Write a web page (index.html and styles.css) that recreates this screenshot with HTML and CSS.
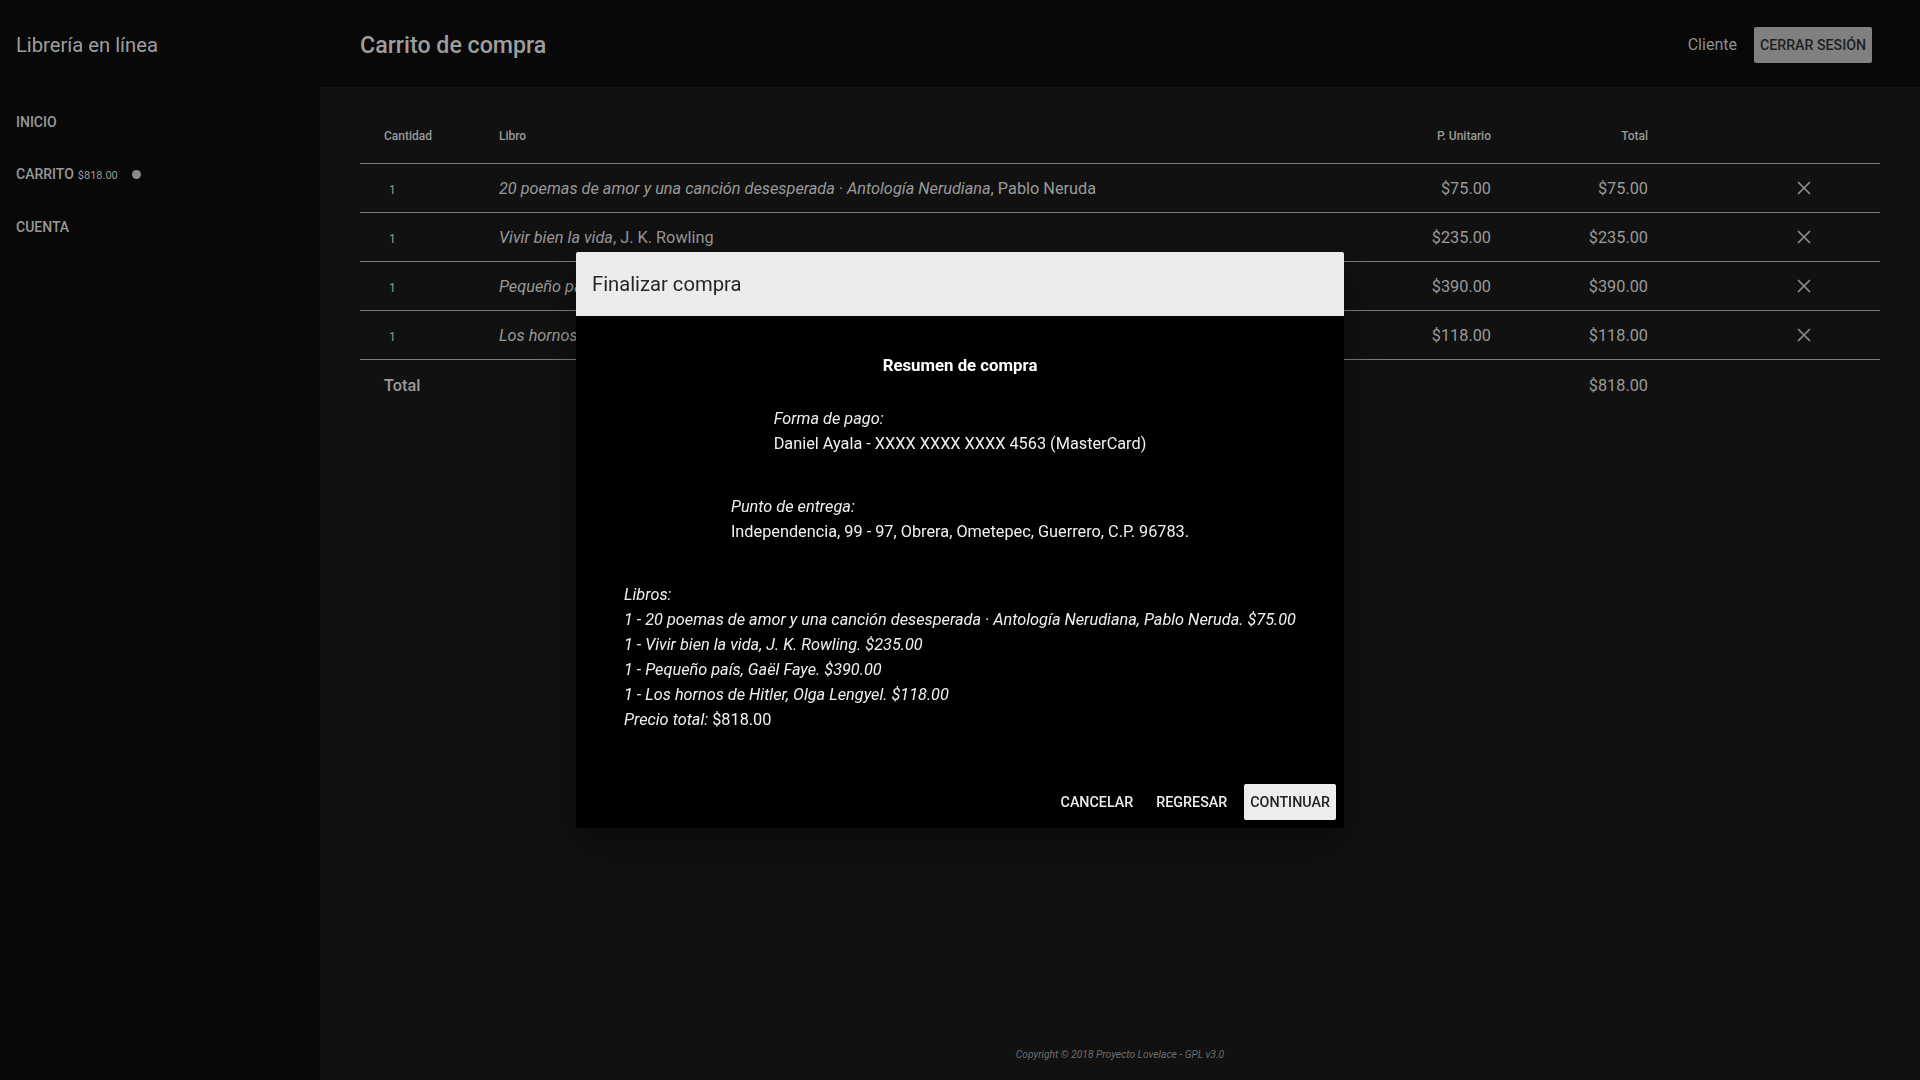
FILE: index.html
```html
<!DOCTYPE html>
<html lang="es">
<head>
<meta charset="utf-8">
<title>Carrito de compra</title>
<link rel="stylesheet" href="styles.css">
</head>
<body>
<header class="topbar">
  <div class="brand">Librería en línea</div>
  <h1 class="page-title">Carrito de compra</h1>
  <div class="user">
    <span class="user-name">Cliente</span>
    <button class="btn-logout">CERRAR SESIÓN</button>
  </div>
</header>
<div class="layout">
  <nav class="sidebar">
    <a class="nav-item">INICIO</a>
    <a class="nav-item">CARRITO <span class="nav-amount">$818.00</span><span class="nav-dot"></span></a>
    <a class="nav-item">CUENTA</a>
  </nav>
  <main class="content">
    <div class="cart">
      <div class="row head">
        <div class="c-qty">Cantidad</div>
        <div class="c-book">Libro</div>
        <div class="c-num">P. Unitario</div>
        <div class="c-num">Total</div>
        <div class="c-act"></div>
      </div>
      <div class="row item">
        <div class="c-qty q">1</div>
        <div class="c-book"><i>20 poemas de amor y una canción desesperada · Antología Nerudiana</i>, Pablo Neruda</div>
        <div class="c-num">$75.00</div>
        <div class="c-num">$75.00</div>
        <div class="c-act"><svg class="x" viewBox="0 0 14 14"><path d="M1 1L13 13M13 1L1 13"/></svg></div>
      </div>
      <div class="row item">
        <div class="c-qty q">1</div>
        <div class="c-book"><i>Vivir bien la vida</i>, J. K. Rowling</div>
        <div class="c-num">$235.00</div>
        <div class="c-num">$235.00</div>
        <div class="c-act"><svg class="x" viewBox="0 0 14 14"><path d="M1 1L13 13M13 1L1 13"/></svg></div>
      </div>
      <div class="row item">
        <div class="c-qty q">1</div>
        <div class="c-book"><i>Pequeño país</i>, Gaël Faye</div>
        <div class="c-num">$390.00</div>
        <div class="c-num">$390.00</div>
        <div class="c-act"><svg class="x" viewBox="0 0 14 14"><path d="M1 1L13 13M13 1L1 13"/></svg></div>
      </div>
      <div class="row item">
        <div class="c-qty q">1</div>
        <div class="c-book"><i>Los hornos de Hitler</i>, Olga Lengyel</div>
        <div class="c-num">$118.00</div>
        <div class="c-num">$118.00</div>
        <div class="c-act"><svg class="x" viewBox="0 0 14 14"><path d="M1 1L13 13M13 1L1 13"/></svg></div>
      </div>
      <div class="row total">
        <div class="c-qty">Total</div>
        <div class="c-book"></div>
        <div class="c-num"></div>
        <div class="c-num">$818.00</div>
        <div class="c-act"></div>
      </div>
    </div>
    <footer class="footer">Copyright © 2018 Proyecto Lovelace - GPL v3.0</footer>
  </main>
</div>

<div class="dialog">
  <div class="dialog-title">Finalizar compra</div>
  <div class="dialog-body">
    <h3 class="summary-title">Resumen de compra</h3>
    <div class="block"><div class="block-inner">
      <i>Forma de pago:</i><br>
      Daniel Ayala - XXXX XXXX XXXX 4563 (MasterCard)
    </div></div>
    <div class="block"><div class="block-inner">
      <i>Punto de entrega:</i><br>
      Independencia, 99 - 97, Obrera, Ometepec, Guerrero, C.P. 96783.
    </div></div>
    <div class="block"><div class="block-inner">
      <i>Libros:</i><br>
      <i>1 - 20 poemas de amor y una canción desesperada · Antología Nerudiana, Pablo Neruda. $75.00</i><br>
      <i>1 - Vivir bien la vida, J. K. Rowling. $235.00</i><br>
      <i>1 - Pequeño país, Gaël Faye. $390.00</i><br>
      <i>1 - Los hornos de Hitler, Olga Lengyel. $118.00</i><br>
      <i>Precio total:</i> $818.00
    </div></div>
  </div>
  <div class="dialog-actions">
    <button class="btn-flat">CANCELAR</button>
    <button class="btn-flat">REGRESAR</button>
    <button class="btn-solid">CONTINUAR</button>
  </div>
</div>
</body>
</html>
```
FILE: styles.css
```css
* { box-sizing: border-box; }
html, body { margin: 0; padding: 0; }
body {
  font-family: Roboto, "Noto Sans", sans-serif;
  background: #080808;
  color: #9a9a9a;
  width: 1920px;
  height: 1080px;
  overflow: hidden;
}
button { font-family: inherit; border: 0; cursor: pointer; }

.topbar {
  height: 87px;
  padding-top: 2px;
  display: flex;
  align-items: center;
  background: #080808;
}
.brand {
  width: 320px;
  padding-left: 16px;
  font-size: 20.2px;
  color: #9e9e9e;
}
.page-title {
  margin: 0;
  padding-left: 40px;
  font-size: 23.2px;
  font-weight: 500;
  color: #9e9e9e;
}
.user {
  margin-left: auto;
  padding-right: 48px;
  display: flex;
  align-items: center;
  gap: 17px;
}
.user-name { font-size: 16px; color: #8f8f8f; }
.btn-logout {
  height: 36px;
  padding: 0 6px;
  background: #808080;
  color: #1e1e1e;
  font-size: 14.2px;
  font-weight: 500;
  border-radius: 2px;
}

.layout {
  display: flex;
  height: 993px;
}
.sidebar {
  width: 320px;
  padding-top: 9px;
  display: flex;
  flex-direction: column;
  background: #080808;
}
.nav-item {
  height: 52px;
  padding-left: 16px;
  display: flex;
  align-items: center;
  font-size: 14px;
  font-weight: 500;
  color: #999;
}
.nav-item:last-child { padding-top: 2px; }
.nav-amount {
  font-size: 11px;
  font-weight: 400;
  margin-left: 4px;
  margin-top: 2px;
}
.nav-dot {
  width: 9px;
  height: 9px;
  border-radius: 50%;
  background: #8a8a8a;
  margin-left: 14px;
}

.content {
  flex: 1;
  background: #111;
  padding: 21px 40px 19px;
  display: flex;
  flex-direction: column;
}
.row {
  display: grid;
  grid-template-columns: 139px 1fr 160px 157px 232px;
  align-items: center;
  height: 49px;
  border-bottom: 1px solid #7c7c7c;
  font-size: 16.3px;
  color: #9a9a9a;
}
.row.head {
  height: 56px;
  font-size: 12px;
  font-weight: 500;
  color: #9a9a9a;
}
.row.total {
  border-bottom: 0;
  padding-top: 1px;
}
.row.total .c-qty { font-weight: 500; }
.c-qty { padding-left: 24px; }
.c-qty.q { padding-left: 29px; padding-top: 3px; font-size: 12px; }
.c-book { white-space: nowrap; overflow: hidden; }
.c-book i { font-style: italic; }
.c-num { text-align: right; }
.c-act {
  display: flex;
  justify-content: flex-end;
  padding-right: 69px;
}
.x {
  width: 14px;
  height: 14px;
  fill: none;
  stroke: #8c8c8c;
  stroke-width: 1.7;
}
.footer {
  margin-top: auto;
  text-align: center;
  font-size: 10.25px;
  font-style: italic;
  color: #6e6e6e;
}

.dialog {
  position: fixed;
  left: 576px;
  top: 252px;
  width: 768px;
  background: #000;
  border-radius: 2px;
  overflow: hidden;
  box-shadow: 0 11px 15px -7px rgba(0,0,0,.2), 0 24px 38px 3px rgba(0,0,0,.14), 0 9px 46px 8px rgba(0,0,0,.12);
}
.dialog-title {
  height: 64px;
  padding: 0 16px;
  display: flex;
  align-items: center;
  background: #ececec;
  color: #262626;
  font-size: 20.2px;
}
.dialog-body {
  padding: 37px 24px 44px;
  color: #f0f0f0;
  font-size: 16.3px;
  line-height: 25px;
}
.summary-title {
  margin: 0 0 29px;
  text-align: center;
  font-size: 16.8px;
  font-weight: 700;
  line-height: 24px;
  color: #fff;
}
.block {
  text-align: center;
  margin-bottom: 38px;
}
.block:last-child { margin-bottom: 0; }
.block-inner {
  display: inline-block;
  text-align: left;
}
.dialog-actions {
  padding: 8px;
  display: flex;
  justify-content: flex-end;
  gap: 11px;
}
.btn-flat, .btn-solid {
  height: 36px;
  padding: 0 6px;
  font-size: 14.3px;
  font-weight: 500;
  border-radius: 2px;
}
.btn-flat { background: transparent; color: #ededed; }
.btn-solid { background: #ededed; color: #222; }
```
